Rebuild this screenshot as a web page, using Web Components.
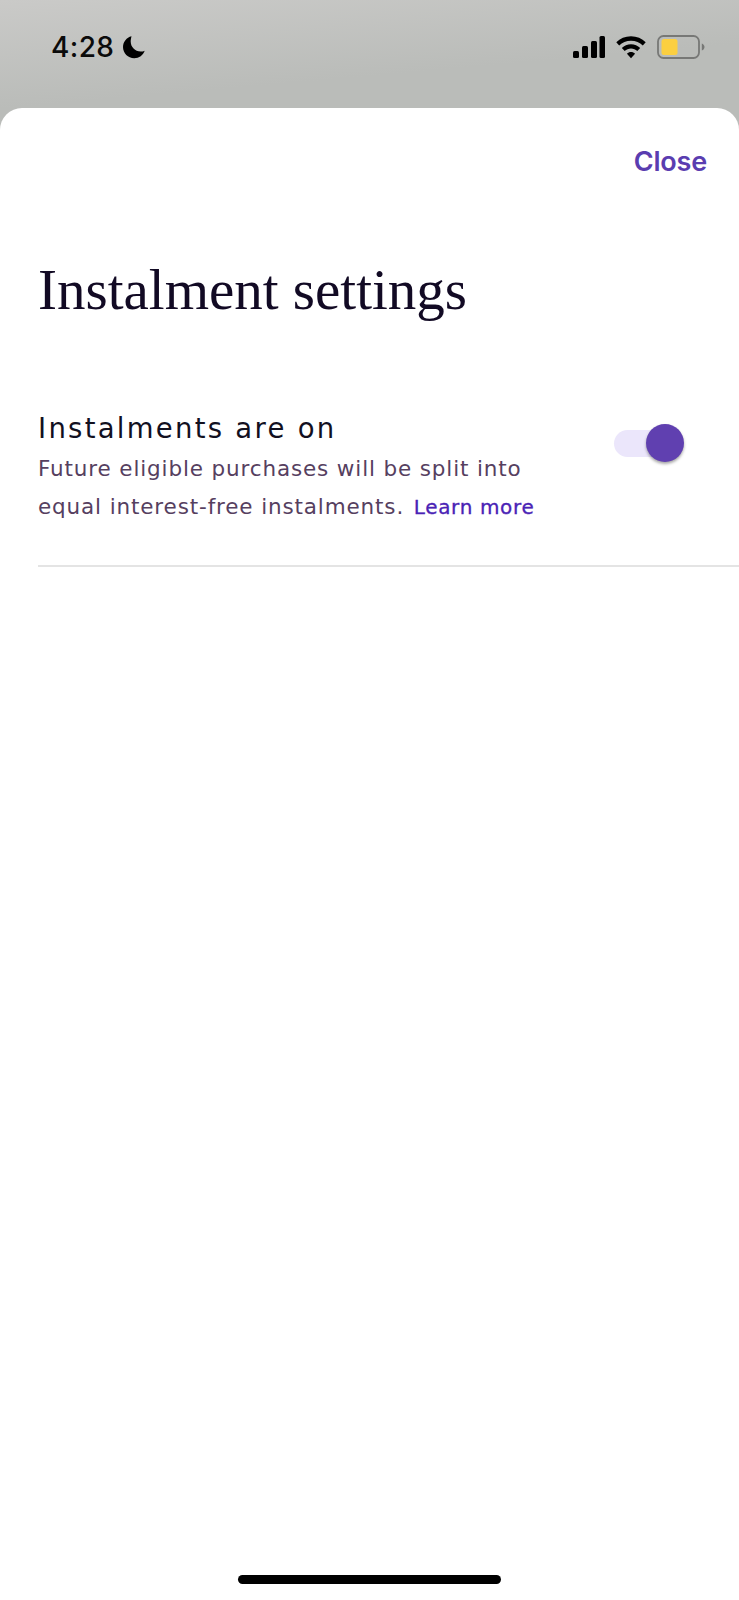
<!DOCTYPE html>
<html>
<head>
<meta charset="utf-8">
<style>
  html, body { margin: 0; height: 100%; background: #fff; }
  body { width: 739px; height: 1600px; overflow: hidden; display: flex; flex-direction: column; background: linear-gradient(175deg, #cacac8 0, #babcb9 108px); }
</style>
</head>
<body>
<status-bar></status-bar>
<settings-sheet>
  <setting-row title="Instalments are on">
    Future eligible purchases will be split into<br>equal interest-free instalments. <learn-link>Learn more</learn-link>
  </setting-row>
</settings-sheet>

<script>
class StatusBar extends HTMLElement {
  connectedCallback() {
    this.attachShadow({ mode: 'open' });
    this.shadowRoot.innerHTML = `
      <style>
        :host {
          display: flex;
          flex: none;
          height: 108px;
          box-sizing: border-box;
          padding: 30px 34px 0 51px;
          justify-content: space-between;
          align-items: flex-start;
          color: #000;
        }
        .left { display: flex; align-items: center; gap: 8px; }
        .time { font: 500 28px/34px Inter, "Liberation Sans", sans-serif; color: #0b0b0b; letter-spacing: 0.4px; }
        .right { display: flex; align-items: center; gap: 11px; height: 34px; }
        svg { display: block; }
      </style>
      <div class="left">
        <span class="time">4:28</span>
        <svg width="24" height="24" viewBox="0 0 24 24"><path fill="#000" d="M9.500 1.200C4.600 2.400 1 6.800 1 12c0 6.200 5 11.200 11.200 11.200 4.900 0 9-3.100 10.500-7.500-1.200.6-2.600.9-4 .9-5.600 0-10-4.500-10-10 0-1.700.3-3.100.8-5.400z"/></svg>
      </div>
      <div class="right">
        <svg width="32" height="22" viewBox="0 0 32 22"><rect x="0" y="15" width="6" height="7" rx="1.500"/><rect x="9" y="10" width="6" height="12" rx="1.500"/><rect x="18" y="5" width="6" height="17" rx="1.500"/><rect x="26.500" y="0" width="5.500" height="22" rx="1.500"/></svg>
        <svg width="30" height="23" viewBox="0 0 31 23"><path d="M15.500 0C9.500 0 4.200 2.300.3 6.200l3 3.200C6.400 6.300 10.700 4.400 15.500 4.400s9.100 1.900 12.200 5l3-3.200C26.800 2.300 21.500 0 15.500 0z"/><path d="M15.500 8.200c-3.700 0-7 1.500-9.500 3.900l3 3.100c1.700-1.600 4-2.700 6.500-2.700s4.800 1.100 6.500 2.700l3-3.100c-2.500-2.400-5.800-3.900-9.500-3.900z"/><path d="M15.500 16.200c-1.600 0-3.100.6-4.200 1.700l4.200 4.600 4.200-4.600c-1.100-1.100-2.600-1.700-4.200-1.700z"/></svg>
        <svg width="48" height="24" viewBox="0 0 48 24"><rect x="1" y="1" width="41" height="22" rx="5.500" fill="none" stroke="#777876" stroke-width="1.800"/><rect x="4.500" y="4" width="16" height="16" rx="2.500" fill="#fbcf40"/><path d="M44.800 8.500c1.600.5 2.700 2 2.700 3.500s-1.100 3-2.700 3.500z" fill="#777876"/></svg>
      </div>
    `;
  }
}

class SettingsSheet extends HTMLElement {
  connectedCallback() {
    this.attachShadow({ mode: 'open' });
    this.shadowRoot.innerHTML = `
      <style>
        :host {
          display: flex;
          flex-direction: column;
          flex: 1;
          position: relative;
          background: #fff;
          border-radius: 22px 22px 0 0;
        }
        .close {
          align-self: flex-end;
          margin: 38px 32px 0 0;
          font: 600 27px/31px Inter, "Liberation Sans", sans-serif;
          letter-spacing: -0.2px;
          color: #5a3db0;
        }
        h1 {
          margin: 78px 0 0 38px;
          font: 400 57px/70px "Liberation Serif", serif;
          color: #120a24;
        }
        .rows { margin: 86px 0 0 38px; }
        .home {
          position: absolute;
          left: 238px;
          bottom: 16px;
          width: 263px;
          height: 9px;
          border-radius: 5px;
          background: #000;
        }
      </style>
      <div class="close">Close</div>
      <h1>Instalment settings</h1>
      <div class="rows"><slot></slot></div>
      <div class="home"></div>
    `;
  }
}

class SettingRow extends HTMLElement {
  connectedCallback() {
    this.attachShadow({ mode: 'open' });
    this.shadowRoot.innerHTML = `
      <style>
        :host {
          display: flex;
          justify-content: space-between;
          align-items: flex-start;
          height: 156px;
          box-sizing: border-box;
          border-bottom: 2px solid #e4e4e4;
          padding-right: 55px;
          font-family: "DejaVu Sans", sans-serif;
        }
        .title { font-size: 27.500px; line-height: 34px; color: #12101f; letter-spacing: 2.27px; white-space: nowrap; }
        .desc { font-size: 21.500px; line-height: 38px; color: #56405f; letter-spacing: 0.86px; margin-top: 5px; white-space: nowrap; }
      </style>
      <div>
        <div class="title"></div>
        <div class="desc"><slot></slot></div>
      </div>
      <toggle-switch></toggle-switch>
    `;
    this.shadowRoot.querySelector('.title').textContent = this.getAttribute('title');
  }
}

class ToggleSwitch extends HTMLElement {
  connectedCallback() {
    this.attachShadow({ mode: 'open' });
    this.shadowRoot.innerHTML = `
      <style>
        :host { display: block; position: relative; width: 70px; height: 38px; margin-top: 13px; }
        .track { position: absolute; left: 0; top: 6px; width: 56px; height: 27px; border-radius: 14px; background: #ebe6fb; }
        .thumb { position: absolute; right: 0; top: 0; width: 38px; height: 38px; border-radius: 50%; background: #6040b0; box-shadow: 0 2px 3px rgba(0,0,0,.35); }
      </style>
      <div class="track"></div>
      <div class="thumb"></div>
    `;
  }
}

class LearnLink extends HTMLElement {
  connectedCallback() {
    this.attachShadow({ mode: 'open' });
    this.shadowRoot.innerHTML = `
      <style>
        :host { display: inline; margin-left: 2px; font-size: 20px; font-weight: 400; color: #4a22b5; letter-spacing: 0.65px; -webkit-text-stroke: 0.3px #4a22b5; }
      </style>
      <slot></slot>
    `;
  }
}

customElements.define('status-bar', StatusBar);
customElements.define('settings-sheet', SettingsSheet);
customElements.define('setting-row', SettingRow);
customElements.define('toggle-switch', ToggleSwitch);
customElements.define('learn-link', LearnLink);
</script>
</body>
</html>
